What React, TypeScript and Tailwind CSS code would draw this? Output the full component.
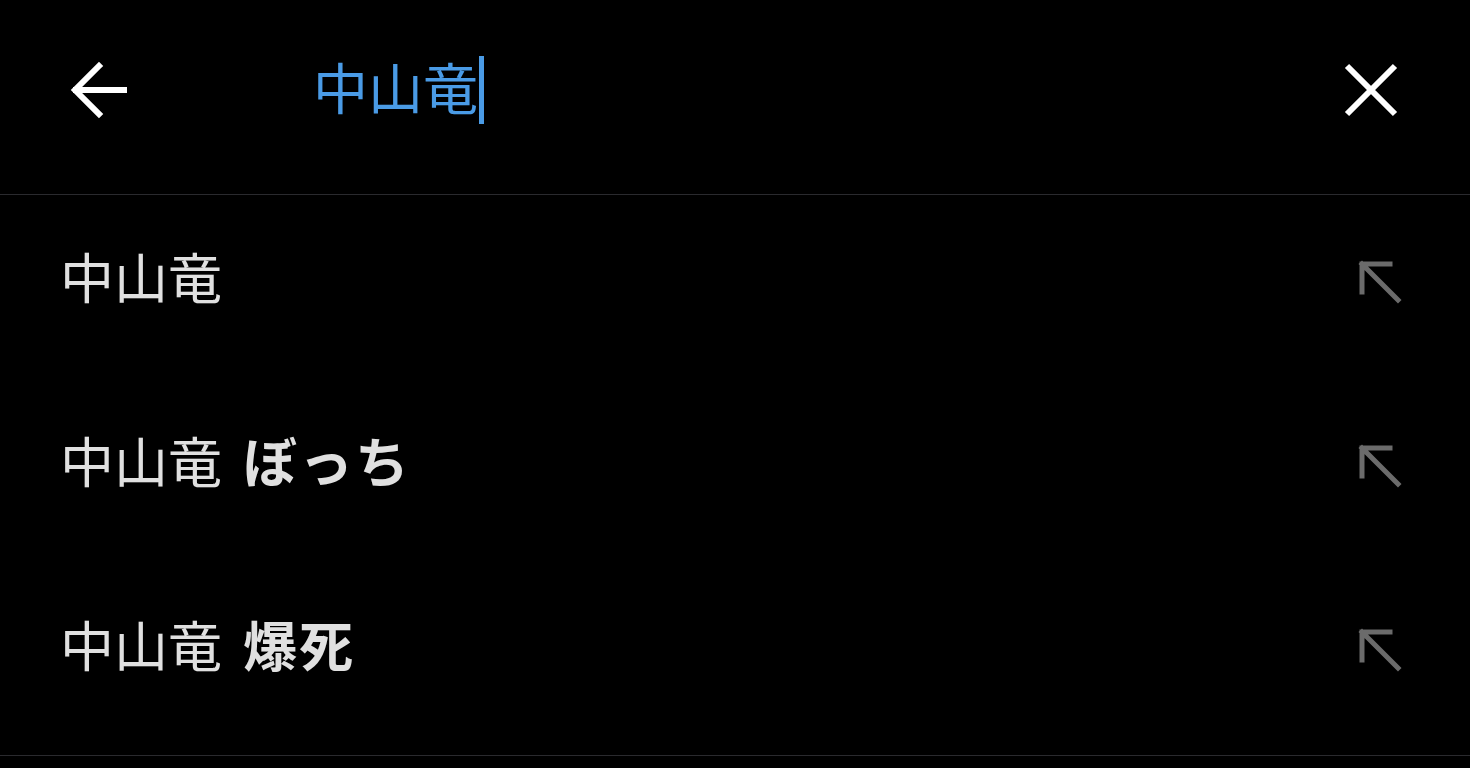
import React from "react";

const font = { fontFamily: '"Noto Sans CJK JP", "Noto Sans", sans-serif' };

function UpLeftArrow() {
  return (
    <svg width="44" height="44" viewBox="0 0 44 44" fill="none">
      <path d="M4 4 L40 40 M4 4 H32 M4 4 V32" stroke="#6b6b6b" strokeWidth="5" strokeLinecap="square" />
    </svg>
  );
}

const rows = [
  { q: "中山竜", rest: "" },
  { q: "中山竜", rest: "ぼっち" },
  { q: "中山竜", rest: "爆死" },
];

export default function App() {
  return (
    <div className="w-[1470px] h-[768px] bg-black overflow-hidden" style={font}>
      {/* search bar */}
      <div className="h-[194px] flex items-center pl-[69px] pr-[71px] pb-[14px]">
        <svg width="58" height="58" viewBox="0 0 58 58" fill="none">
          <path d="M56 29 H7 M30 5 L6 29 L30 53" stroke="white" strokeWidth="6" strokeLinecap="square" strokeLinejoin="miter" />
        </svg>
        <div className="ml-[186px] flex items-center flex-1">
          <span className="text-[55px] leading-none text-[#4a9be6] -mt-[10px]">中山竜</span>
          <span className="w-[5px] h-[68px] bg-[#4a9be6] ml-[1px]" />
        </div>
        <svg width="56" height="56" viewBox="0 0 56 56" fill="none">
          <path d="M4 4 L52 52 M52 4 L4 52" stroke="white" strokeWidth="6" />
        </svg>
      </div>
      <div className="h-px bg-[#2a2a2e]" />
      <div className="flex flex-col gap-[16px] mb-[24px]">
        {rows.map((r, i) => (
          <div key={i} className="h-[168px] flex items-center justify-between pl-[60px] pr-[68px]">
            <span className="text-[54px] leading-none text-[#e0e0e0] -mt-[6px]">
              {r.q}
              {r.rest && <span className="font-bold ml-[21px] tracking-[2px]">{r.rest}</span>}
            </span>
            <span className="mt-[6px]">
              <UpLeftArrow />
            </span>
          </div>
        ))}
      </div>
      <div className="h-px bg-[#2a2a2e]" />
    </div>
  );
}
